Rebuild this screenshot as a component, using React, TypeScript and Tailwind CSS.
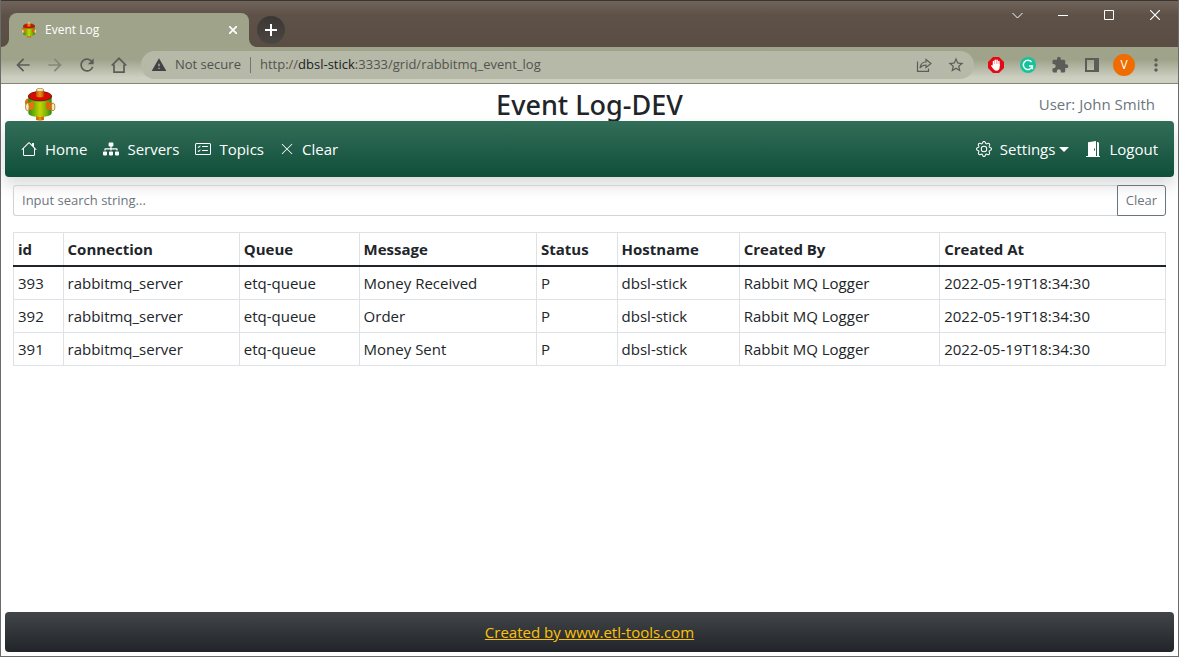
import type { ReactNode } from "react";
import { BsHouse, BsCardChecklist, BsXLg, BsGear } from "react-icons/bs";
import { FaSitemap } from "react-icons/fa";
import {
  MdArrowBack,
  MdArrowForward,
  MdRefresh,
  MdWarning,
  MdStarBorder,
  MdExtension,
  MdMoreVert,
} from "react-icons/md";

type EventRow = {
  id: number;
  connection: string;
  queue: string;
  message: string;
  status: string;
  hostname: string;
  createdBy: string;
  createdAt: string;
};

const common = {
  connection: "rabbitmq_server",
  queue: "etq-queue",
  status: "P",
  hostname: "dbsl-stick",
  createdBy: "Rabbit MQ Logger",
  createdAt: "2022-05-19T18:34:30",
};

const rows: EventRow[] = [
  { id: 393, message: "Money Received", ...common },
  { id: 392, message: "Order", ...common },
  { id: 391, message: "Money Sent", ...common },
];

const columns: { key: keyof EventRow; label: string; width: string }[] = [
  { key: "id", label: "id", width: "w-[4.3%]" },
  { key: "connection", label: "Connection", width: "w-[15.3%]" },
  { key: "queue", label: "Queue", width: "w-[10.4%]" },
  { key: "message", label: "Message", width: "w-[15.4%]" },
  { key: "status", label: "Status", width: "w-[7%]" },
  { key: "hostname", label: "Hostname", width: "w-[10.6%]" },
  { key: "createdBy", label: "Created By", width: "w-[17.4%]" },
  { key: "createdAt", label: "Created At", width: "w-[19.6%]" },
];

function BarrelLogo({ className }: { className: string }) {
  return (
    <svg viewBox="0 0 32 34" className={className} aria-hidden="true">
      <defs>
        <linearGradient id="barrel" x1="0" x2="1">
          <stop offset="0" stopColor="#2f8a10" />
          <stop offset="0.2" stopColor="#62ae0c" />
          <stop offset="0.5" stopColor="#c6d500" />
          <stop offset="0.8" stopColor="#6fb10b" />
          <stop offset="1" stopColor="#23830f" />
        </linearGradient>
        <linearGradient id="pipe" x1="0" x2="1">
          <stop offset="0" stopColor="#c9540b" />
          <stop offset="0.5" stopColor="#e8950f" />
          <stop offset="1" stopColor="#b9480b" />
        </linearGradient>
      </defs>
      <path d="M12 27h8v5.500c0 1.500-8 1.500-8 0z" fill="url(#pipe)" />
      <path d="M5 10.500 2.500 11C0 12.500 0 16 1.500 18L5 19z" fill="#db720e" />
      <path d="M4 8.500V26c0 5 24 5 24 0V8.500z" fill="url(#barrel)" />
      <ellipse cx="16" cy="8.500" rx="12" ry="4.800" fill="#d90b00" stroke="#641b08" />
      <path d="M12 2v6.500c0 1.500 8 1.500 8 0V2z" fill="url(#pipe)" />
      <ellipse cx="16" cy="2" rx="3.900" ry="1.600" fill="#fff0b5" stroke="#977431" strokeWidth=".7" />
      <path d="M3 15.500 9 14c1.500 2 1.500 6 0 8l-6 1.500z" fill="#e3740f" />
      <ellipse cx="3" cy="19.500" rx="1.900" ry="4" fill="#ffeab0" stroke="#987327" strokeWidth=".8" />
      <path d="m29 15.500-6-1.500c-1.500 2-1.500 6 0 8l6 1.500z" fill="#dd640c" />
      <ellipse cx="29.500" cy="19.500" rx="1.900" ry="4" fill="#ffeab0" stroke="#987327" strokeWidth=".8" />
    </svg>
  );
}

function IconButton({ label, className = "", children }: { label: string; className?: string; children: ReactNode }) {
  return (
    <button type="button" aria-label={label} className={`flex size-8 shrink-0 items-center justify-center ${className}`}>
      {children}
    </button>
  );
}

function TitleBar() {
  return (
    <div className="flex h-[47px] border-t border-[#393532] bg-linear-to-b from-[#70645b] via-[#5e5148] via-30% to-[#5a4d44] pl-2">
      <div className="relative mt-3 flex w-60 items-center rounded-t-lg bg-[#9fa38a] pl-3 pr-2 text-white">
        <svg viewBox="0 0 8 8" className="absolute -left-2 bottom-0 size-2" aria-hidden="true">
          <path d="M8 0v8H0a8 8 0 0 0 8-8" fill="#9fa38a" />
        </svg>
        <svg viewBox="0 0 8 8" className="absolute -right-2 bottom-0 size-2" aria-hidden="true">
          <path d="M0 0v8h8a8 8 0 0 1-8-8" fill="#9fa38a" />
        </svg>
        <BarrelLogo className="size-4" />
        <span className="ml-2 flex-1 text-xs">Event Log</span>
        <button type="button" aria-label="Close tab" className="flex size-4 items-center justify-center">
          <svg viewBox="0 0 8 8" className="size-2" stroke="currentColor" strokeWidth="1.700" aria-hidden="true">
            <path d="m0 0 8 8M8 0 0 8" />
          </svg>
        </button>
      </div>
      <button
        type="button"
        aria-label="New tab"
        className="ml-2 mt-[15px] flex size-7 items-center justify-center rounded-full bg-linear-to-b from-[#3b3734] to-[#4b4642] text-white"
      >
        <svg viewBox="0 0 12 12" className="size-3" stroke="currentColor" strokeWidth="2" aria-hidden="true">
          <path d="M6 0v12M0 6h12" />
        </svg>
      </button>
      <div className="ml-auto flex h-7 text-white">
        <button type="button" aria-label="Search tabs" className="flex w-[46px] items-center justify-center">
          <svg viewBox="0 0 11 11" className="size-[11px]" fill="none" stroke="currentColor" aria-hidden="true">
            <path d="m.5 3 5 5 5-5" />
          </svg>
        </button>
        <button type="button" aria-label="Minimize" className="flex w-[46px] items-center justify-center">
          <svg viewBox="0 0 10 10" className="size-2.5" fill="none" stroke="currentColor" aria-hidden="true">
            <path d="M0 5.500h10" />
          </svg>
        </button>
        <button type="button" aria-label="Maximize" className="flex w-[46px] items-center justify-center">
          <svg viewBox="0 0 10 10" className="size-2.5" fill="none" stroke="currentColor" aria-hidden="true">
            <path d="M.5.5h9v9h-9z" />
          </svg>
        </button>
        <button type="button" aria-label="Close window" className="flex w-[46px] items-center justify-center">
          <svg viewBox="0 0 10 10" className="size-2.5" fill="none" stroke="currentColor" strokeWidth="1.200" aria-hidden="true">
            <path d="m0 0 10 10M10 0 0 10" />
          </svg>
        </button>
      </div>
    </div>
  );
}

function Toolbar() {
  return (
    <div className="flex h-[37px] items-center border-b border-[#85877a] bg-linear-to-b from-[#9fa38a] from-35% to-[#cdcfc1] to-85% px-1.5 text-[#5c5c59]">
      <IconButton label="Back">
        <MdArrowBack className="size-5" />
      </IconButton>
      <IconButton label="Forward" className="text-[#85877a]">
        <MdArrowForward className="size-5" />
      </IconButton>
      <IconButton label="Reload">
        <MdRefresh className="size-5" />
      </IconButton>
      <IconButton label="Home page">
        <svg viewBox="0 0 16 16" className="size-4" fill="none" stroke="currentColor" strokeWidth="1.700" aria-hidden="true">
          <path d="M.7 8.500 8 1.300l7.300 7.200M3 7.500v7.600h10V7.500" />
        </svg>
      </IconButton>
      <div className="ml-1.5 flex h-7 min-w-0 flex-1 items-center rounded-full bg-[#b6b9a7] pl-2.5 text-[13px]">
        <MdWarning className="size-4 text-[#414344]" />
        <span className="ml-2 shrink-0 text-[#4e5250]">Not secure</span>
        <span className="mx-[9px] h-4 w-px bg-[#74766b]" />
        <span className="min-w-0 flex-1 truncate text-[#51544f]">
          http://<span className="text-[#202124]">dbsl-stick</span>:3333/grid/rabbitmq_event_log
        </span>
        <IconButton label="Share">
          <svg viewBox="0 0 16 16" className="size-4" fill="none" stroke="currentColor" strokeWidth="1.200" aria-hidden="true">
            <path d="M1.500 4.500v9.900h11v-3M4 11c.5-4 3-6 6-6V2.500l5 4-5 4V8c-3 0-4.500.7-6 3z" />
          </svg>
        </IconButton>
        <IconButton label="Bookmark" className="mr-0.5">
          <MdStarBorder className="size-[18px]" />
        </IconButton>
      </div>
      <IconButton label="Ad blocker" className="ml-1.5">
        <svg viewBox="0 0 16 16" className="size-4" aria-hidden="true">
          <path d="M5 0h6l5 5v6l-5 5H5l-5-5V5z" fill="#e50914" />
          <g fill="none" stroke="white" strokeWidth="1.500" strokeLinecap="round">
            <path d="M5.500 8V4.500M7.300 8V3.200M9.100 8V3.200M10.900 9V4.500M5.500 11 3.900 8.800" />
          </g>
          <path d="M4.800 7h6.800v3.500c0 2-1.200 3.200-3 3.200-1.600 0-2.600-.6-3.300-1.900z" fill="white" />
        </svg>
      </IconButton>
      <IconButton label="Grammar checker">
        <svg viewBox="0 0 16 16" className="size-4" aria-hidden="true">
          <circle cx="8" cy="8" r="8" fill="#15c39a" />
          <path d="M11.500 5A4.600 4.600 0 1 0 12.400 9H9M12.400 9v3.300" fill="none" stroke="white" strokeWidth="1.400" />
        </svg>
      </IconButton>
      <IconButton label="Extensions">
        <MdExtension className="size-[18px]" />
      </IconButton>
      <IconButton label="Side panel">
        <svg viewBox="0 0 14 14" className="size-3.5" aria-hidden="true">
          <path d="M1 1h12v12H1z" fill="none" stroke="currentColor" strokeWidth="2" />
          <path d="M9 1h4v12H9z" fill="currentColor" />
        </svg>
      </IconButton>
      <IconButton label="Profile">
        <span className="flex size-[22px] items-center justify-center rounded-full bg-[#ef6c00] text-xs text-white">V</span>
      </IconButton>
      <IconButton label="Browser menu">
        <MdMoreVert className="size-5" />
      </IconButton>
    </div>
  );
}

function DoorIcon() {
  return (
    <svg viewBox="0 0 16 16" className="size-4" fill="currentColor" aria-hidden="true">
      <path d="M1 15h14v1H1z" />
      <path fillRule="evenodd" d="M3 1.200 11 0v15H3zM9 7.500v2h1v-2z" />
      <path d="M12 1h.5c.8 0 1.500.7 1.500 1.500V15h-2z" />
    </svg>
  );
}

function NavLink({ icon, children }: { icon: ReactNode; children: ReactNode }) {
  return (
    <a href="#" className="flex items-center gap-2 p-2">
      {icon}
      <span>{children}</span>
    </a>
  );
}

function NavBar() {
  return (
    <nav className="mx-1 flex h-14 items-center justify-between rounded bg-linear-to-b from-[#326d58] to-[#0e4f3a] px-2 text-[15px] text-white shadow-[0_8px_16px_rgba(0,0,0,0.15)]">
      <div className="flex">
        <NavLink icon={<BsHouse className="size-4" />}>Home</NavLink>
        <NavLink icon={<FaSitemap className="size-4" />}>Servers</NavLink>
        <NavLink icon={<BsCardChecklist className="size-4" />}>Topics</NavLink>
        <NavLink icon={<BsXLg className="size-3.5" />}>Clear</NavLink>
      </div>
      <div className="flex">
        <button type="button" className="flex items-center gap-2 p-2">
          <BsGear className="size-4" />
          <span className="flex items-center gap-1">
            Settings
            <svg viewBox="0 0 10 5" className="h-[5px] w-2.5" aria-hidden="true">
              <path d="M0 0h10L5 5z" fill="currentColor" />
            </svg>
          </span>
        </button>
        <NavLink icon={<DoorIcon />}>Logout</NavLink>
      </div>
    </nav>
  );
}

function EventTable() {
  return (
    <table className="w-full table-fixed border-collapse text-left text-[15px] leading-6">
      <thead>
        <tr>
          {columns.map((c) => (
            <th key={c.key} scope="col" className={`border border-b-2 border-[#dee2e6] border-b-[#212529] p-1 font-bold ${c.width}`}>
              {c.label}
            </th>
          ))}
        </tr>
      </thead>
      <tbody>
        {rows.map((row) => (
          <tr key={row.id}>
            {columns.map((c) => (
              <td key={c.key} className="border border-[#dee2e6] p-1">
                {row[c.key]}
              </td>
            ))}
          </tr>
        ))}
      </tbody>
    </table>
  );
}

export default function App() {
  return (
    <div className="flex min-h-screen flex-col border-x border-b border-[#6b6b6b] bg-white font-['Segoe_UI','Open_Sans',sans-serif] text-[#212529]">
      <TitleBar />
      <Toolbar />
      <header className="grid h-[37px] grid-cols-3 items-center px-[23px] pt-1">
        <BarrelLogo className="h-[33px] w-8" />
        <h1 className="whitespace-nowrap text-center font-['Segoe_UI','Noto_Sans',sans-serif] text-[27px] leading-8 font-medium">
          Event Log-DEV
        </h1>
        <span className="text-right text-[15px] text-[#6c757d]">User: John Smith</span>
      </header>
      <NavBar />
      <main className="flex-1 px-3 pt-2">
        <form className="mb-4 flex h-[31px] text-[13px]">
          <input
            type="text"
            aria-label="Search"
            placeholder="Input search string..."
            className="min-w-0 flex-1 rounded-l-[3px] border border-r-0 border-[#ced4da] px-2 placeholder:text-[#6c757d]"
          />
          <button type="reset" className="rounded-r-[3px] border border-[#6c757d] px-2 text-[#6c757d]">
            Clear
          </button>
        </form>
        <EventTable />
      </main>
      <footer className="mx-1 mb-1 flex h-10 items-center justify-center rounded bg-linear-to-b from-[#424649] to-[#212529] text-[15px]">
        <a href="#" className="text-[#ffc107] underline">
          Created by www.etl-tools.com
        </a>
      </footer>
    </div>
  );
}
